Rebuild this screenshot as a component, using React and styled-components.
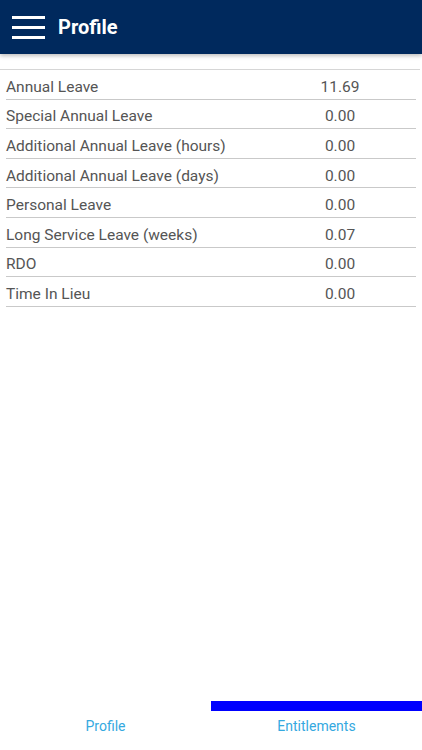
import React from "react";
import styled, { createGlobalStyle } from "styled-components";

const GlobalStyle = createGlobalStyle`
  html, body {
    margin: 0;
    padding: 0;
    background: #ffffff;
    font-family: Roboto, "Liberation Sans", sans-serif;
  }
`;

const Screen = styled.div`
  width: 422px;
  height: 750px;
  display: flex;
  flex-direction: column;
  background: #fff;
  overflow: hidden;
`;

const TopBar = styled.header`
  height: 54px;
  flex-shrink: 0;
  display: flex;
  align-items: center;
  background: #00295d;
  box-shadow: 0 2px 4px rgba(0, 0, 0, 0.25);
  position: relative;
  z-index: 1;
`;

const MenuButton = styled.div`
  width: 33px;
  margin-left: 12px;
  display: flex;
  flex-direction: column;
  gap: 7px;
`;

const MenuLine = styled.span`
  display: block;
  height: 3px;
  background: #fff;
`;

const Title = styled.h1`
  margin: 0 0 0 13px;
  color: #fff;
  font-size: 20px;
  font-weight: 700;
`;

const Body = styled.main`
  flex: 1;
  padding-top: 15px;
`;

const Table = styled.div`
  border-top: 1px solid #d6d6d6;
  margin-right: 2px;
`;

const Row = styled.div`
  box-sizing: border-box;
  display: flex;
  align-items: center;
  height: 29.6px;
  padding-top: 5px;
  margin: 0 4px 0 6px;
  border-bottom: 1px solid #c9c9c9;
  font-size: 15.5px;
  color: #555;
`;

const Label = styled.span`
  flex: 1;
`;

const Value = styled.span`
  width: 60px;
  margin-right: 46px;
  text-align: center;
`;

const TabBar = styled.nav`
  height: 49px;
  flex-shrink: 0;
  display: flex;
`;

const Tab = styled.div`
  flex: 1;
  display: flex;
  flex-direction: column;
  align-items: center;
  border-top: 10px solid ${(p) => (p.active ? "#0000ff" : "transparent")};
  padding-top: 7px;
  color: #35a9df;
  font-size: 14px;
`;

const entitlements = [
  ["Annual Leave", "11.69"],
  ["Special Annual Leave", "0.00"],
  ["Additional Annual Leave (hours)", "0.00"],
  ["Additional Annual Leave (days)", "0.00"],
  ["Personal Leave", "0.00"],
  ["Long Service Leave (weeks)", "0.07"],
  ["RDO", "0.00"],
  ["Time In Lieu", "0.00"],
];

const App = () => (
  <Screen>
    <GlobalStyle />
    <TopBar>
      <MenuButton>
        <MenuLine />
        <MenuLine />
        <MenuLine />
      </MenuButton>
      <Title>Profile</Title>
    </TopBar>
    <Body>
      <Table>
        {entitlements.map(([label, value]) => (
          <Row key={label}>
            <Label>{label}</Label>
            <Value>{value}</Value>
          </Row>
        ))}
      </Table>
    </Body>
    <TabBar>
      <Tab>Profile</Tab>
      <Tab active>Entitlements</Tab>
    </TabBar>
  </Screen>
);

export default App;
